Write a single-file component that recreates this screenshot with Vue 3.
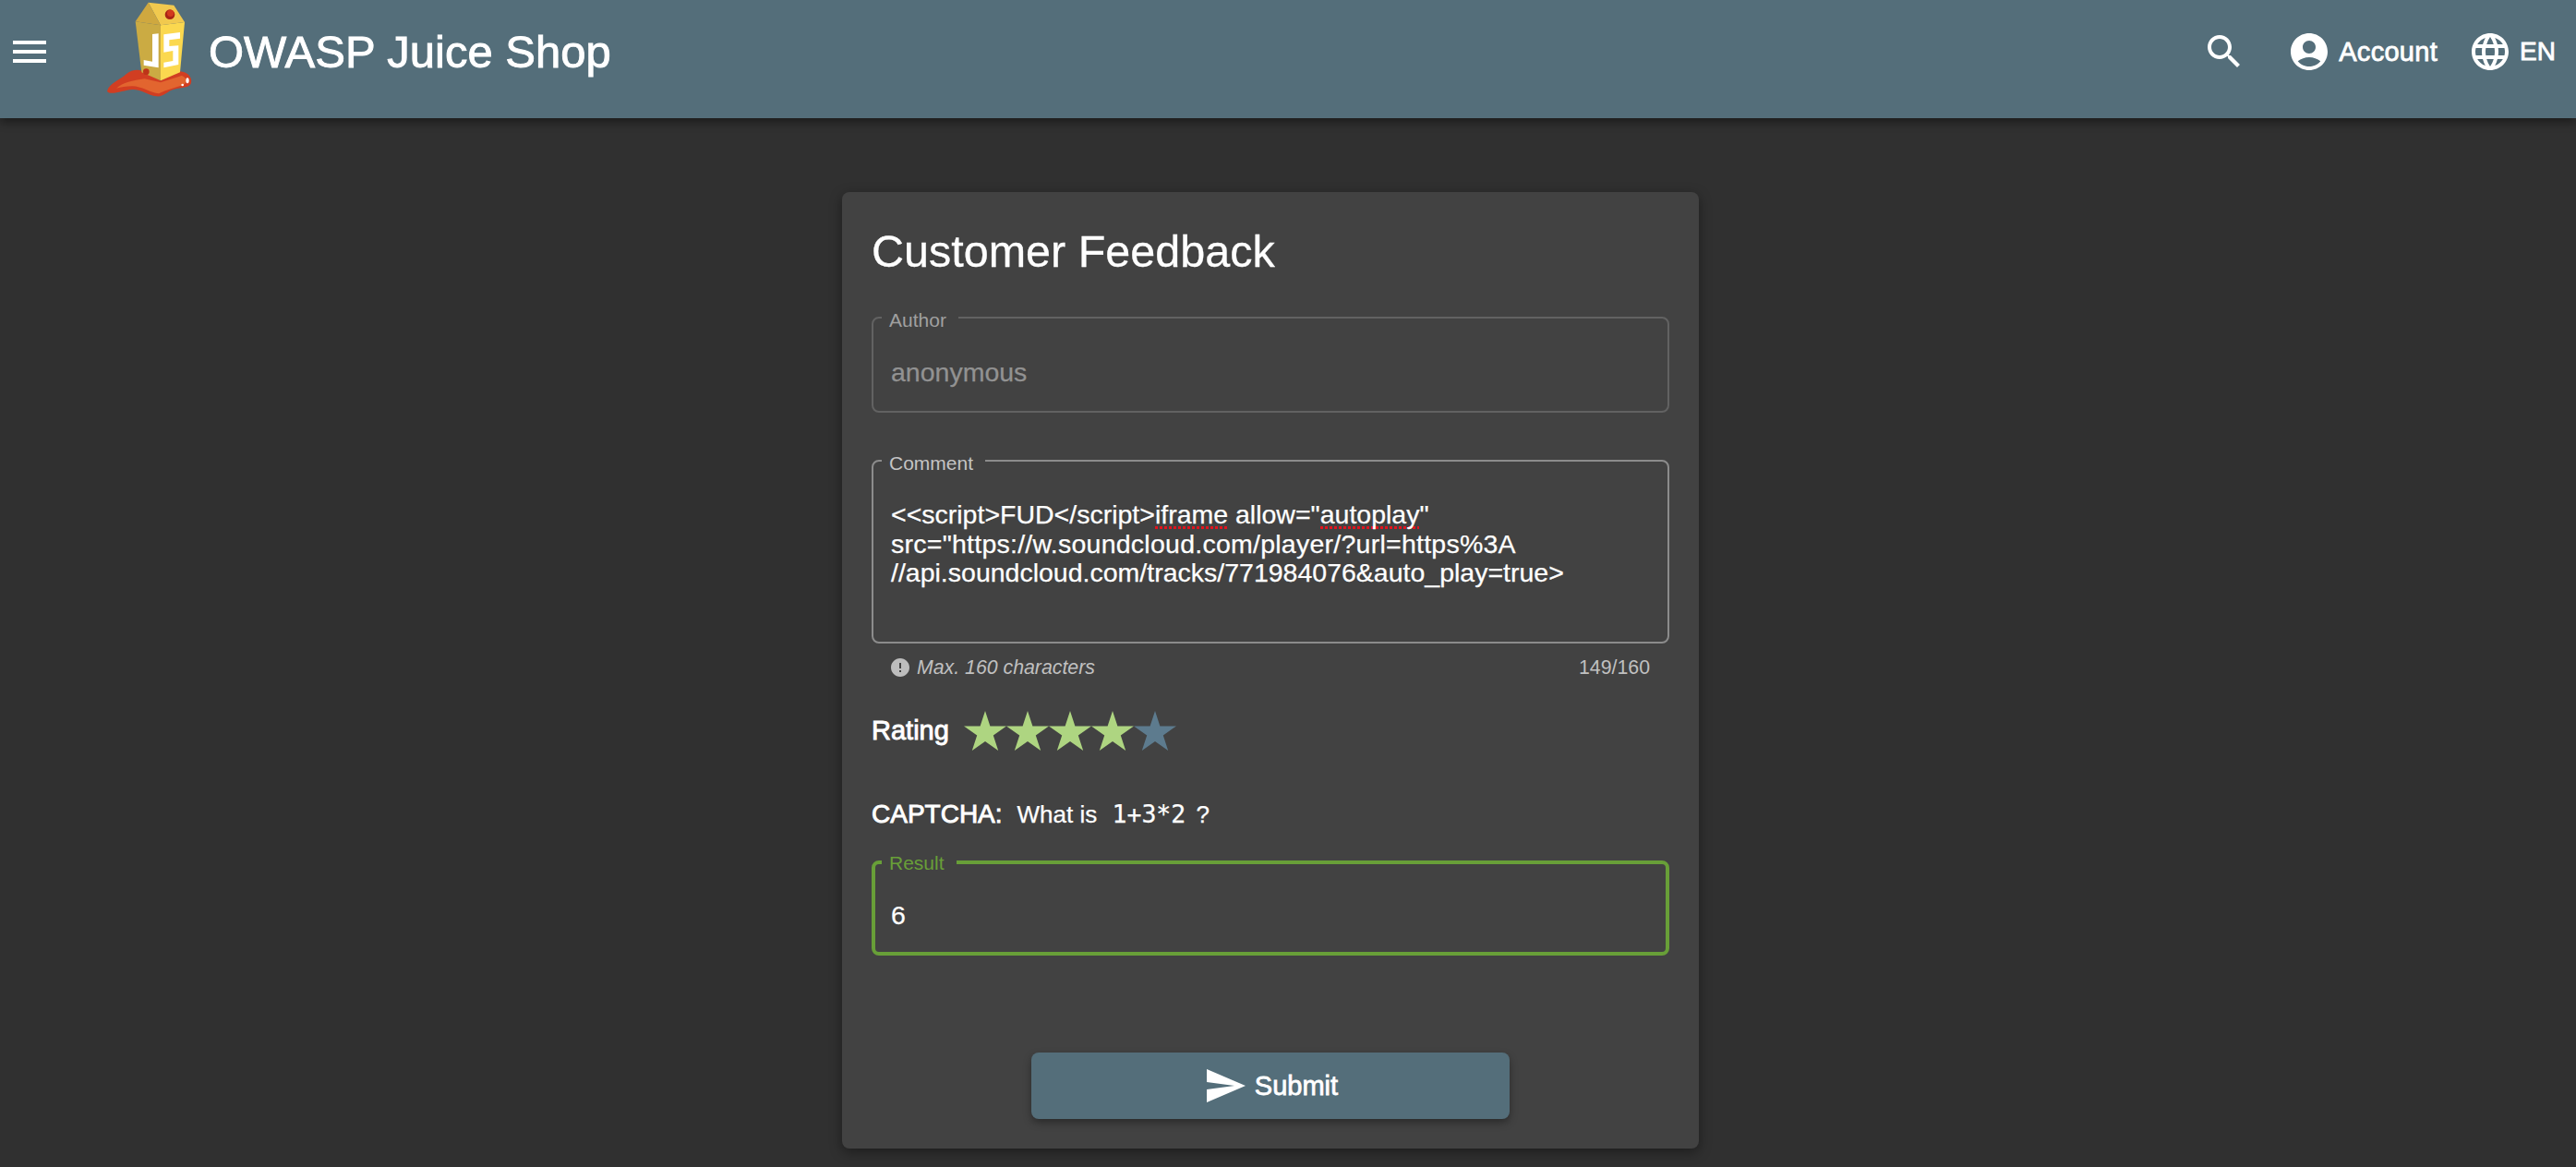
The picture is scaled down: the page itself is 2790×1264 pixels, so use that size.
<template>
  <div class="page">
    <header class="toolbar">
      <svg class="icon menu" viewBox="0 0 24 24"><path d="M3 18h18v-2H3v2zm0-5h18v-2H3v2zm0-7v2h18V6H3z" /></svg>
      <svg class="logo" viewBox="0 0 375 330">
        <path d="M48 296C56 270 88 262 110 241C130 224 158 224 170 236L222 262L285 232C308 234 326 250 321 270C316 286 290 284 265 290C245 295 230 316 208 313C180 309 160 290 130 291C100 293 58 312 48 296Z" fill="#d13e22" />
        <path d="M78 287C100 268 130 262 170 256L222 268L290 246C306 250 310 268 296 276C270 284 240 292 216 304C190 302 160 280 130 280C110 280 92 284 78 287Z" fill="#e2652f" />
        <polygon points="140,70 222,82 222,262 160,235" fill="#cbab43" />
        <polygon points="222,82 300,72 285,235 222,262" fill="#fbd84f" />
        <polygon points="182,8 265,17 300,72 222,82" fill="#f1c94e" />
        <polygon points="182,8 222,82 140,70" fill="#cfa83f" />
        <polygon points="195,111 215,109 215,220 167,212 167,195 195,200" fill="#fff" />
        <polygon points="232,112 285,105 285,125 250,130 250,150 280,148 280,210 232,220 232,203 262,198 262,165 232,170" fill="#fff" />
        <circle cx="252" cy="47" r="16" fill="#a92416" />
        <circle cx="254" cy="43" r="11" fill="#d23a1e" />
        <circle cx="175" cy="233" r="10" fill="#bd3419" />
        <ellipse cx="309" cy="262" rx="5" ry="9" fill="#fff" />
        <circle cx="293" cy="276" r="4" fill="#fff" />
      </svg>
      <span class="brand">OWASP Juice Shop</span>
      <div class="actions">
        <svg class="icon" viewBox="0 0 24 24"><path d="M15.5 14h-.79l-.28-.27C15.41 12.59 16 11.11 16 9.5 16 5.91 13.09 3 9.5 3S3 5.91 3 9.5 5.91 16 9.5 16c1.61 0 3.09-.59 4.23-1.57l.27.28v.79l5 4.99L20.49 19l-4.99-5zm-6 0C7.01 14 5 11.99 5 9.5S7.01 5 9.5 5 14 7.01 14 9.5 11.99 14 9.5 14z" /></svg>
        <div class="action account">
          <svg class="icon" viewBox="0 0 24 24"><path d="M12 2C6.48 2 2 6.48 2 12s4.48 10 10 10 10-4.48 10-10S17.52 2 12 2zm0 4c1.93 0 3.5 1.57 3.5 3.5S13.93 13 12 13s-3.5-1.57-3.5-3.5S10.07 6 12 6zm0 14c-2.03 0-4.43-.82-6.14-2.88C7.55 15.8 9.68 15 12 15s4.45.8 6.14 2.12C16.43 19.18 14.03 20 12 20z" /></svg>
          <span>Account</span>
        </div>
        <div class="action lang">
          <svg class="icon" viewBox="0 0 24 24"><path d="M11.99 2C6.47 2 2 6.48 2 12s4.47 10 9.99 10C17.52 22 22 17.52 22 12S17.52 2 11.99 2zm6.93 6h-2.95c-.32-1.25-.78-2.45-1.38-3.56 1.84.63 3.37 1.91 4.33 3.56zM12 4.04c.83 1.2 1.48 2.53 1.91 3.96h-3.82c.43-1.43 1.08-2.76 1.91-3.96zM4.26 14C4.1 13.36 4 12.69 4 12s.1-1.36.26-2h3.38c-.08.66-.14 1.32-.14 2 0 .68.06 1.34.14 2H4.26zm.82 2h2.95c.32 1.25.78 2.45 1.38 3.56-1.84-.63-3.37-1.9-4.33-3.56zm2.95-8H5.08c.96-1.66 2.49-2.93 4.33-3.56C8.81 5.55 8.35 6.75 8.03 8zM12 19.96c-.83-1.2-1.48-2.53-1.91-3.96h3.82c-.43 1.43-1.08 2.76-1.91 3.96zM14.34 14H9.66c-.09-.66-.16-1.32-.16-2 0-.68.07-1.35.16-2h4.68c.09.65.16 1.32.16 2 0 .68-.07 1.34-.16 2zm.25 5.56c.6-1.11 1.06-2.31 1.38-3.56h2.95c-.96 1.65-2.49 2.93-4.33 3.56zM16.36 14c.08-.66.14-1.32.14-2 0-.68-.06-1.34-.14-2h3.38c.16.64.26 1.31.26 2s-.1 1.36-.26 2h-3.38z" /></svg>
          <span class="lang-code">EN</span>
        </div>
      </div>
    </header>

    <main class="card">
      <h1 class="title">Customer Feedback</h1>

      <div class="field author">
        <label class="label">Author</label>
        <div class="value">anonymous</div>
      </div>

      <div class="field comment">
        <label class="label">Comment</label>
        <div class="value">&lt;&lt;script&gt;FUD&lt;/script&gt;<span class="spell">iframe</span> allow="<span class="spell">autoplay</span>"<br /><span class="url-line">src="https://w.soundcloud.com/player/?url=https%3A</span><br />//api.soundcloud.com/tracks/771984076&amp;auto_play=true&gt;</div>
      </div>
      <div class="hint">
        <svg class="hint-icon" viewBox="0 0 24 24"><path d="M12 2C6.48 2 2 6.48 2 12s4.48 10 10 10 10-4.48 10-10S17.52 2 12 2zm1 15h-2v-2h2v2zm0-4h-2V7h2v6z" /></svg>
        <em>Max. 160 characters</em>
        <span class="count">149/160</span>
      </div>

      <div class="rating">
        <span class="strong">Rating</span>
        <div class="stars">
          <svg v-for="n in 5" :key="n" class="star" :class="{ on: n <= rating }" viewBox="0 0 46 43" preserveAspectRatio="none">
            <polygon points="23,0 28.4,16.4 46,16.4 31.8,26.6 37.2,43 23,32.9 8.8,43 14.2,26.6 0,16.4 17.6,16.4" />
          </svg>
        </div>
      </div>

      <div class="captcha">
        <span class="strong">CAPTCHA:</span>
        <span class="question">What is <code>1+3*2</code> ?</span>
      </div>

      <div class="field result">
        <label class="label">Result</label>
        <div class="value">6</div>
      </div>

      <button class="submit">
        <svg class="icon" viewBox="0 0 24 24"><path d="M2.01 21L23 12 2.01 3 2 10l15 2-15 2z" /></svg>
        <span>Submit</span>
      </button>
    </main>
  </div>
</template>

<script setup>
const rating = 4
</script>

<style>
html,
body {
  background: #303030;
}
</style>

<style scoped>
.page {
  height: 1264px;
  overflow: hidden;
  background: #303030;
  color: #fff;
  font-family: "Liberation Sans", Arial, sans-serif;
  font-size: 28px;
}
.toolbar {
  display: flex;
  align-items: center;
  box-sizing: border-box;
  height: 128px;
  padding: 0 22px 16px 8px;
  background: #546e7a;
  box-shadow: 0 4px 10px rgba(0, 0, 0, 0.45);
  position: relative;
}
.icon {
  width: 48px;
  height: 48px;
  fill: #fff;
  flex: none;
}
.logo {
  align-self: flex-start;
  width: 125px;
  height: 110px;
  margin-left: 44px;
  flex: none;
}
.brand {
  margin-left: 1px;
  font-size: 49px;
  line-height: 56px;
  -webkit-text-stroke: 0.9px #fff;
}
.actions {
  margin-left: auto;
  display: flex;
  align-items: center;
}
.action {
  display: flex;
  align-items: center;
  gap: 8px;
  font-size: 29px;
  letter-spacing: 0.3px;
  -webkit-text-stroke: 0.8px #fff;
}
.lang-code {
  font-size: 28px;
  letter-spacing: 0;
}
.account {
  margin-left: 44px;
}
.lang {
  margin-left: 33px;
}
.card {
  box-sizing: border-box;
  width: 928px;
  margin: 80px 0 0 912px;
  padding: 34px 32px 32px;
  background: #424242;
  border-radius: 8px;
  box-shadow: 0 4px 14px rgba(0, 0, 0, 0.4);
}
.title {
  margin: 0 0 41px;
  font-size: 48.5px;
  font-weight: 400;
  line-height: 60px;
  -webkit-text-stroke: 0.3px #fff;
}
.field {
  position: relative;
  box-sizing: border-box;
  border: 2px solid #626262;
  border-radius: 8px;
  padding: 42px 19px 26px;
  font-size: 28.5px;
  line-height: 32px;
  -webkit-text-stroke: 0.25px;
}
.label {
  position: absolute;
  top: -10px;
  left: 9px;
  padding: 0 13px 0 8px;
  background: #424242;
  font-size: 21px;
  line-height: 24px;
  color: #a0a0a0;
  -webkit-text-stroke: 0;
}
.author {
  height: 104px;
}
.author .value {
  color: #929292;
}
.comment {
  height: 199px;
  margin-top: 51px;
  border-color: #8c8c8c;
  line-height: 31.5px;
}
.comment .label {
  color: #c4c4c4;
}
.spell {
  background: repeating-linear-gradient(90deg, #e0141e 0 3px, transparent 3px 5px) 0 100% / 100% 3px no-repeat;
}
.url-line {
  letter-spacing: 0.25px;
}
.hint {
  display: flex;
  align-items: center;
  margin-top: 15px;
  padding: 0 21px 0 17px;
  height: 22px;
  font-size: 21.3px;
  color: #c0c0c0;
}
.hint-icon {
  width: 24px;
  height: 24px;
  fill: #bdbdbd;
  margin-right: 6px;
  margin-left: 2px;
  flex: none;
}
.count {
  margin-left: auto;
}
.rating {
  display: flex;
  align-items: center;
  gap: 16px;
  margin-top: 36px;
}
.rating .strong {
  font-size: 29px;
}
.strong {
  -webkit-text-stroke: 0.9px #fff;
}
.stars {
  display: flex;
}
.star {
  width: 46px;
  height: 43px;
  fill: #5d7b8e;
}
.star.on {
  fill: #aed581;
}
.captcha {
  display: flex;
  align-items: baseline;
  gap: 16px;
  margin-top: 53px;
  line-height: 32px;
}
.question {
  font-size: 26px;
  -webkit-text-stroke: 0.25px #fff;
}
code {
  margin: 0 4px 0 9px;
  font-family: "DejaVu Sans Mono", monospace;
  font-size: 26.5px;
}
.result {
  height: 103px;
  margin-top: 34px;
  border: 4px solid #689f38;
  padding: 39px 17px 24px;
}
.result .label {
  top: -13px;
  left: 7px;
  color: #689f38;
}
.submit {
  display: flex;
  align-items: center;
  justify-content: center;
  gap: 8px;
  width: 518px;
  height: 72px;
  margin: 105px auto 0;
  padding: 0;
  border: 0;
  border-radius: 8px;
  background: #546e7a;
  color: #fff;
  font-family: inherit;
  font-size: 29px;
  -webkit-text-stroke: 0.8px #fff;
  box-shadow: 0 4px 8px rgba(0, 0, 0, 0.35);
}
</style>
